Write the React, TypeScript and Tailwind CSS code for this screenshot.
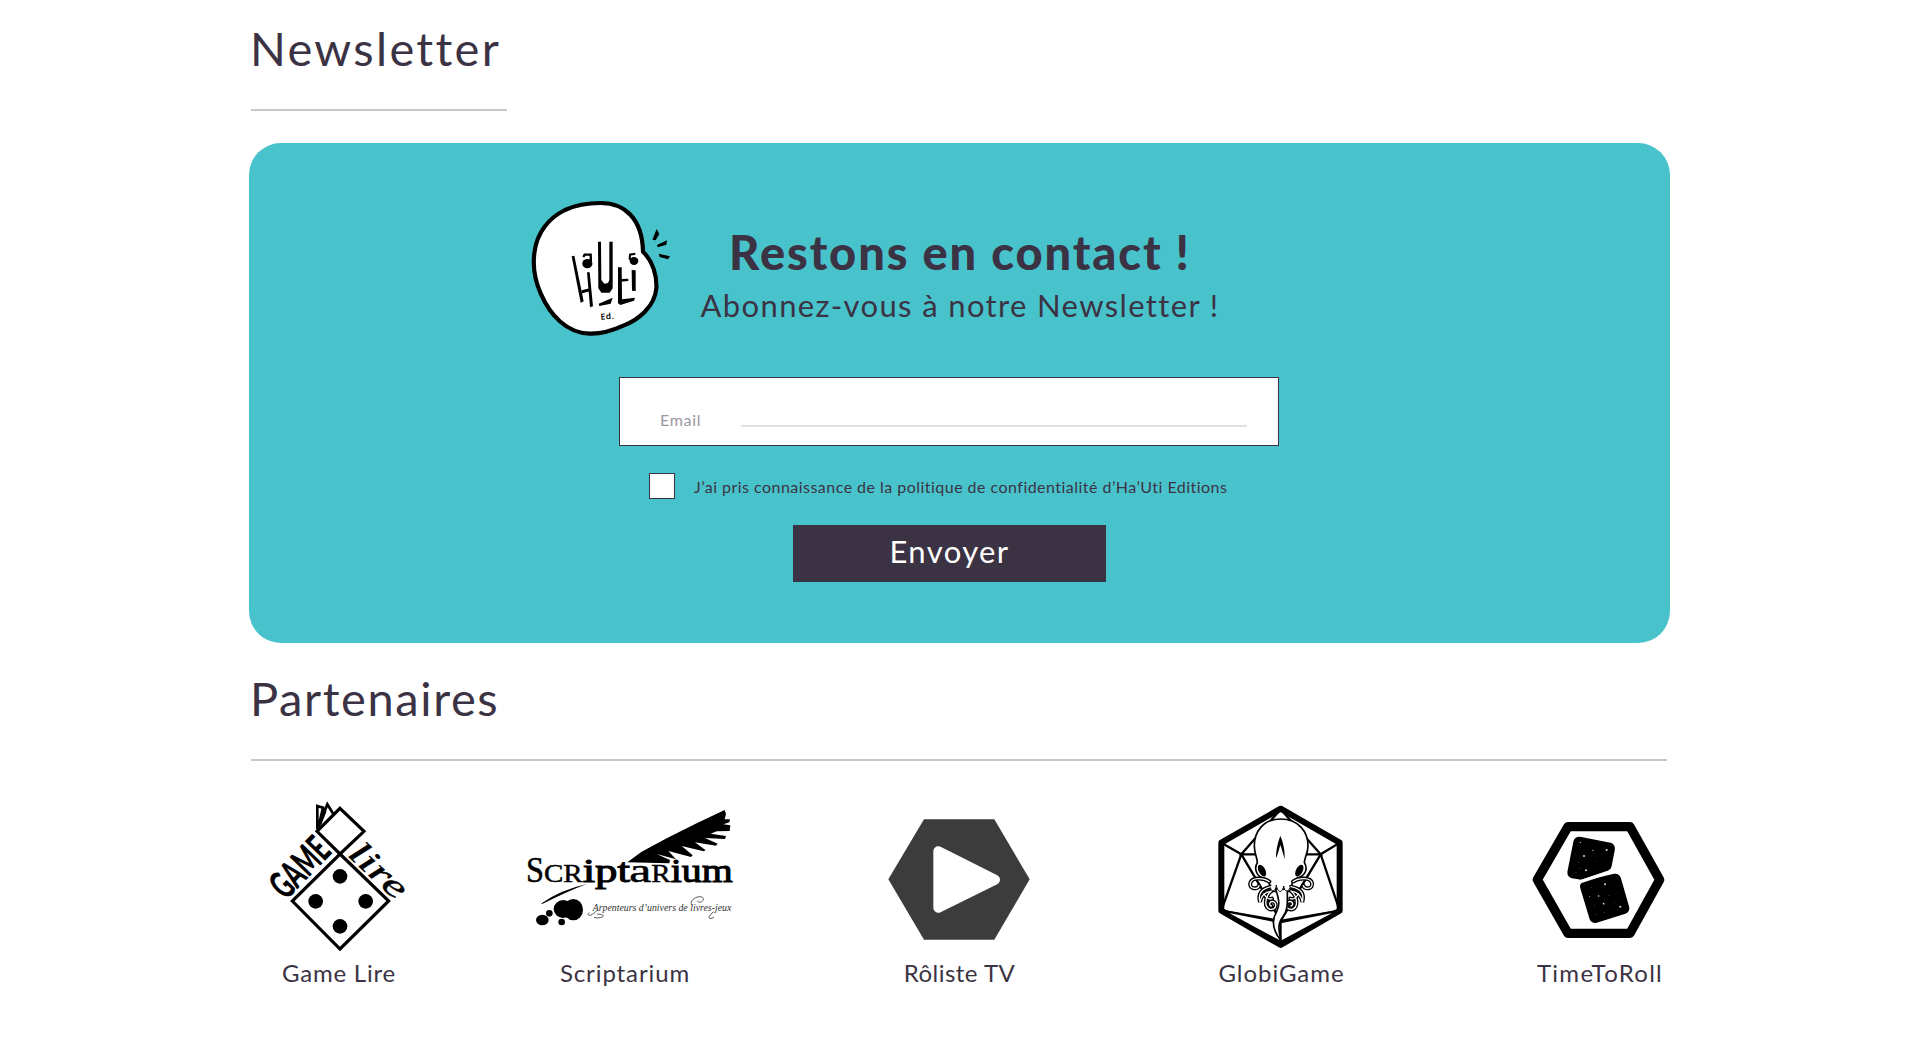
import React from "react";

function HaUtiLogo() {
  return (
    <svg width="180" height="170" viewBox="0 0 540 510" className="block" aria-label="Ha'Uti Ed.">
      <path
        d="M270 69C345 68 397 117 399 215C430 245 441 290 439 325C434 380 385 420 340 437C305 453 275 462 240 461C170 460 120 405 92 340C72 295 68 260 73 220C80 155 120 112 165 90C200 74 235 69 270 69Z"
        fill="#fff"
        stroke="#000"
        strokeWidth="12.5"
        strokeLinejoin="round"
      />
      <g fill="#000">
        <polygon points="440,147 448,162 437,181 427,179" />
        <polygon points="471,181 469,194 443,202 441,195" />
        <polygon points="446,221 480,229 474,238 449,231" />
        <polygon points="185,229 193,227 221,364 212,368" />
        <polygon points="231,277 239,277 249,379 240,382" />
        <polygon points="215,331 239,325 240,334 216,340" />
        <polygon points="264,185 273,185 274,300 283,311 294,309 298,300 298,185 308,185 308,325 299,338 274,338 265,325" />
        <polygon points="266,371 308,353 302,371 268,378" />
        <polygon points="324,262 335,262 336,358 375,353 372,362 331,375 324,370" />
        <polygon points="330,297 355,296 355,303 330,305" />
        <polygon points="365,270 377,271 377,333 366,332" />
        <ellipse cx="232" cy="251" rx="15" ry="14" />
        <ellipse cx="372" cy="243" rx="13" ry="12" />
      </g>
      <g fill="none" stroke="#000">
        <polyline points="220,231 224,224 242,224 243,256" strokeWidth="7" />
        <polyline points="376,221 360,224 359,236 370,239" strokeWidth="6" />
      </g>
      <text x="272" y="419" fontSize="25" fontFamily="'Noto Sans', sans-serif" fontWeight="600" textLength="40" transform="rotate(-4 272 419)">
        Ed.
      </text>
    </svg>
  );
}

function GameLireLogo() {
  return (
    <svg width="190" height="165" viewBox="0 0 570 495" className="block overflow-visible">
      <g fill="none" stroke="#000" strokeWidth="9.5">
        <path d="M300 192L446 333L300 477L157 333Z" />
        <path d="M300 55L372 124L300 192L231 124Z" />
        <path d="M232 118V48L249 53L236 110L262 43L280 72" strokeWidth="8" />
        <path d="M240 103L256 62" strokeWidth="8" />
      </g>
      <circle cx="300" cy="259" r="22" />
      <circle cx="227" cy="334" r="22" />
      <circle cx="377" cy="334" r="22" />
      <circle cx="300" cy="409" r="22" />
      <text transform="translate(138 333) rotate(-46)" fontFamily="Lato, sans-serif" fontWeight="900" fontSize="116" textLength="202" lengthAdjust="spacingAndGlyphs">
        GAME
      </text>
      <text transform="translate(320 196) rotate(43)" fontFamily="'Liberation Serif', serif" fontStyle="italic" fontSize="100" textLength="202" lengthAdjust="spacingAndGlyphs" stroke="#000" strokeWidth="1.5">
        lire
      </text>
    </svg>
  );
}

function ScriptariumLogo() {
  return (
    <svg width="240" height="165" viewBox="0 0 720 495" className="block overflow-visible">
      <path d="M352 217L395 185L470 145L560 100L644 60L648 72L644 88L660 88L658 97L640 103L661 106L659 123L620 124L602 131L648 138L645 147L585 144L623 161L618 167L555 157L587 181L581 184L515 168L548 196L543 201L475 183L498 208L440 192L480 210L478 220Z" />
      <path d="M95 340Q150 300 230 282Q170 305 95 343Z" />
      <ellipse cx="160" cy="357" rx="29" ry="27" />
      <ellipse cx="190" cy="359" rx="29" ry="32" />
      <ellipse cx="97" cy="390" rx="19" ry="16" />
      <circle cx="118" cy="370" r="10" />
      <circle cx="155" cy="396" r="10" />
      <g fontFamily="'Liberation Serif', serif" fill="#000" stroke="#000" strokeWidth="1.5">
        <text x="48" y="275" fontSize="108" textLength="54" lengthAdjust="spacingAndGlyphs">S</text>
        <text x="102" y="275" fontSize="78" textLength="116" lengthAdjust="spacingAndGlyphs">CR</text>
        <text x="218" y="275" fontSize="98" strokeWidth="3" textLength="142" lengthAdjust="spacingAndGlyphs">ipt</text>
        <text x="358" y="275" fontSize="100" textLength="66" lengthAdjust="spacingAndGlyphs">a</text>
        <text x="424" y="275" fontSize="78" textLength="58" lengthAdjust="spacingAndGlyphs">R</text>
        <text x="482" y="275" fontSize="98" strokeWidth="3" textLength="186" lengthAdjust="spacingAndGlyphs">ium</text>
      </g>
      <text x="248" y="363" fontFamily="'Liberation Serif', serif" fontStyle="italic" fontSize="34" fill="#333" textLength="416" lengthAdjust="spacingAndGlyphs">
        Arpenteurs d’univers de livres-jeux
      </text>
      <g fill="none" stroke="#555" strokeWidth="3">
        <path d="M262 360C240 385 228 375 238 368M262 372C300 375 270 388 252 382" />
        <path d="M545 345C535 325 580 310 580 328C578 340 562 338 562 332M610 365C590 385 595 390 612 382" />
      </g>
    </svg>
  );
}

function RolisteLogo() {
  return (
    <svg width="180" height="165" viewBox="0 0 540 495" className="block">
      <polygon points="162,88 373,88 479,268 373,449 162,449 55,268" fill="#3c3c3c" />
      <path d="M205 184L375 269L205 353Z" fill="#fff" stroke="#fff" strokeWidth="30" strokeLinejoin="round" />
    </svg>
  );
}

function GlobiGameLogo() {
  const tentacles = (
    <>
      <path d="M208 275C190 262 155 262 151 279C147 297 172 300 177 287" />
      <path d="M214 290C185 296 173 310 180 336C183 320 190 306 212 304" />
      <path d="M214 303C196 318 190 350 210 358C230 361 232 338 218 334C207 334 207 346 214 348" />
      <path d="M192 312C200 325 206 330 216 326" />
    </>
  );
  return (
    <svg width="170" height="165" viewBox="0 0 510 495" className="block">
      <polygon points="242,56 419,158 419,362 242,465 64,362 64,158" fill="#fff" stroke="#000" strokeWidth="18" strokeLinejoin="round" />
      <g fill="none" stroke="#000" strokeWidth="7">
        <path d="M64 158L124 193L64 362L242 393L419 362L362 193L419 158" />
        <path d="M124 193L242 58L362 193Z" />
        <path d="M124 193L242 392L362 193" />
      </g>
      <path d="M68 362L242 397L416 362L242 456Z" fill="#fff" stroke="#000" strokeWidth="6" />
      <path d="M242 393V456" stroke="#000" strokeWidth="6" />
      <path
        d="M242 87C190 87 163 125 163 167C163 190 172 205 172 218C162 232 168 255 184 262C200 268 211 270 209 295L214 304L270 304L276 290C273 270 290 266 302 260C320 250 322 232 313 218C313 204 324 190 324 167C324 125 295 87 242 87Z"
        fill="#fff"
        stroke="#000"
        strokeWidth="5"
      />
      <path d="M228 205C228 180 234 155 241 138C249 155 255 180 254 208C249 190 245 175 241 165C237 178 233 195 228 205Z" />
      <ellipse cx="186" cy="242" rx="10" ry="19" transform="rotate(-28 186 242)" />
      <ellipse cx="298" cy="242" rx="10" ry="19" transform="rotate(28 298 242)" />
      <g fill="none" strokeLinecap="round">
        <g stroke="#000" strokeWidth="12">
          {tentacles}
          <g transform="matrix(-1 0 0 1 487 0)">{tentacles}</g>
        </g>
        <g stroke="#fff" strokeWidth="4">
          {tentacles}
          <g transform="matrix(-1 0 0 1 487 0)">{tentacles}</g>
        </g>
      </g>
      <path
        d="M226 295C238 330 240 345 230 365C214 390 218 420 243 452C236 420 232 402 248 382C265 360 262 335 262 298Z"
        fill="#fff"
        stroke="#000"
        strokeWidth="5"
      />
      <path d="M211 292C214 308 226 307 229 285C233 310 247 310 251 288C254 308 266 306 270 293L260 276H220Z" fill="#fff" />
      <path d="M211 292C214 308 226 307 229 285C233 310 247 310 251 288C254 308 266 306 270 293" fill="none" stroke="#000" strokeWidth="3" />
    </svg>
  );
}

function TimeToRollLogo() {
  const specks = [
    [211, 157, 2], [249, 181, 2], [290, 180, 3], [222, 198, 3], [196, 192, 1], [206, 218, 1],
    [255, 213, 1], [228, 241, 3], [208, 236, 1], [198, 247, 1], [285, 283, 3], [245, 291, 1],
    [266, 318, 2.5], [239, 319, 1.5], [297, 316, 1], [281, 341, 2.5], [331, 350, 3], [254, 345, 1],
    [258, 373, 1], [283, 367, 1], [312, 337, 1],
  ];
  return (
    <svg width="180" height="165" viewBox="0 0 540 495" className="block">
      <polygon points="174,110 360,110 449,269 360,430 174,430 82,269" fill="#fff" stroke="#000" strokeWidth="28" strokeLinejoin="round" />
      <g stroke="#000" strokeLinejoin="round" strokeWidth="34">
        <path d="M207 157L298 175L288 226L212 252L189 248Z" />
        <path d="M227 289L316 268L341 355L255 382Z" />
      </g>
      <path d="M200 279L318 240" stroke="#fff" strokeWidth="10" />
      {specks.map(([x, y, r], i) => (
        <circle key={i} cx={x} cy={y} r={r} fill="#ddd" />
      ))}
    </svg>
  );
}

const title = "h-14 pl-px text-[47px] leading-14 whitespace-nowrap";
const label = "mt-0.5 h-8 text-2xl leading-8 text-center whitespace-nowrap";

export default function App() {
  return (
    <main className="h-[1042px] w-[1919px] overflow-hidden bg-white pt-5 pl-[249px] font-['Lato',sans-serif] text-[#3b3344]">
      <section>
        <h2 className={title + " tracking-[2.3px]"}>Newsletter</h2>
        <hr className="mt-[33px] ml-0.5 h-0.5 w-64 border-0 bg-[#c8c7cd]" />
        <div className="mt-8 h-[500px] w-[1421px] rounded-[32px] bg-[#49c3cb]">
          <div className="flex h-[234px] pt-[37px] pl-[261px]">
            <HaUtiLogo />
            <div className="flex w-[540px] flex-col items-center pt-11">
              <h3 className="h-14 text-[47px] leading-14 font-black tracking-[1.9px] whitespace-nowrap">Restons en contact !</h3>
              <p className="mt-[5px] h-10 text-[31px] leading-10 tracking-[1.36px] whitespace-nowrap">Abonnez-vous à notre Newsletter !</p>
            </div>
          </div>
          <form className="ml-[370px] w-[660px]" onSubmit={(e) => e.preventDefault()}>
            <label className="flex h-[69px] border border-[#3b3344] bg-white pl-10">
              <span className="mt-[30px] h-6 w-[81px] text-base leading-6 tracking-[0.7px] text-[#9b97a2]">Email</span>
              <input type="email" className="mt-6 h-[25px] w-[506px] border-b-2 border-[#e1e1e1] outline-none" />
            </label>
            <label className="mt-[27px] ml-[30px] flex h-[26px] items-center">
              <input type="checkbox" className="size-[26px] appearance-none border border-[#3b3344] bg-white" />
              <span className="mt-0.5 ml-[19px] text-base leading-6 tracking-[0.47px] whitespace-nowrap">
                J’ai pris connaissance de la politique de confidentialité d’Ha’Uti Editions
              </span>
            </label>
            <button className="mt-[26px] ml-[174px] h-[57px] w-[313px] bg-[#3b3344] pb-[5px] text-[31px] leading-[52px] tracking-[1.4px] text-white">
              Envoyer
            </button>
          </form>
        </div>
      </section>
      <section className="mt-[27px]">
        <h2 className={title + " tracking-[1.6px]"}>Partenaires</h2>
        <hr className="mt-[33px] ml-0.5 h-0.5 w-[1416px] border-0 bg-[#c8c7cd]" />
        <div className="mt-[29px] flex">
          <figure className="-ml-[9px] w-[190px]">
            <GameLireLogo />
            <figcaption className={label + " pl-2 tracking-[0.8px]"}>Game Lire</figcaption>
          </figure>
          <figure className="ml-20 w-60">
            <ScriptariumLogo />
            <figcaption className={label + " -ml-2.5 tracking-[0.9px]"}>Scriptarium</figcaption>
          </figure>
          <figure className="ml-[120px] w-[180px]">
            <RolisteLogo />
            <figcaption className={label + " -ml-px tracking-[0.5px]"}>Rôliste TV</figcaption>
          </figure>
          <figure className="ml-[150px] w-[170px]">
            <GlobiGameLogo />
            <figcaption className={label + " -ml-[7px] tracking-[0.95px]"}>GlobiGame</figcaption>
          </figure>
          <figure className="ml-[140px] w-[180px]">
            <TimeToRollLogo />
            <figcaption className={label + " tracking-[1.3px]"}>TimeToRoll</figcaption>
          </figure>
        </div>
      </section>
    </main>
  );
}
